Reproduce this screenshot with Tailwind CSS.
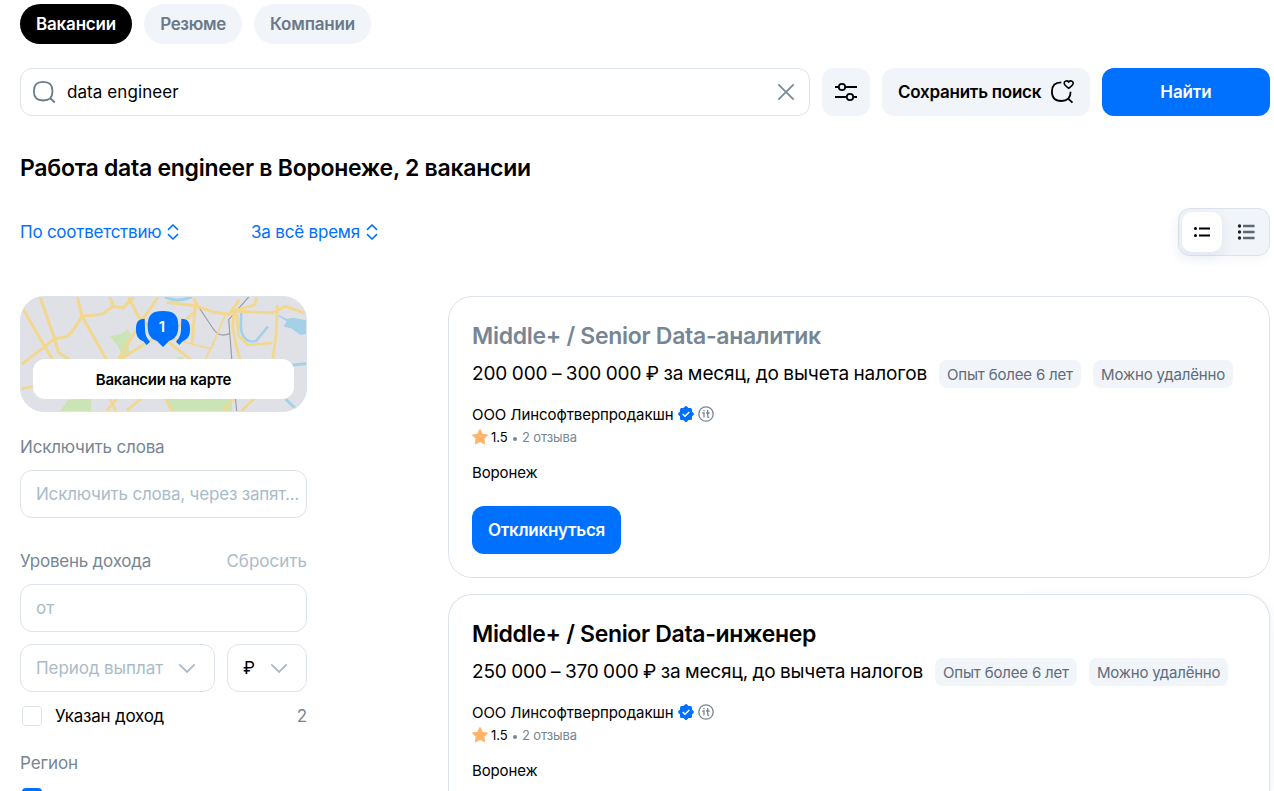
<!DOCTYPE html>
<html lang="ru">
<head>
    <meta charset="UTF-8">
    <meta name="viewport" content="width=device-width, initial-scale=1.0">
    <title>Работа data engineer в Воронеже</title>
    <script src="https://cdn.jsdelivr.net/npm/@tailwindcss/browser@4"></script>
</head>
<body class="bg-white text-black font-['Inter','Liberation_Sans',sans-serif] text-[17px] leading-6 whitespace-nowrap h-[791px] overflow-hidden">
    <div class="w-[1250px] h-[791px] ml-5 pt-1">
        <!-- Tabs -->
        <nav class="flex gap-3 h-10">
            <a class="flex items-center justify-center w-28 rounded-full bg-black text-white font-semibold tracking-[-0.19px]">Вакансии</a>
            <a class="flex items-center justify-center w-[98px] rounded-full bg-[#f1f4f9] text-[#6a7a89] font-semibold tracking-[-0.35px]">Резюме</a>
            <a class="flex items-center justify-center w-[117px] rounded-full bg-[#f1f4f9] text-[#6a7a89] font-semibold tracking-[-0.18px]">Компании</a>
        </nav>

        <!-- Search -->
        <div class="flex gap-3 h-12 mt-6">
            <div class="flex items-center flex-1 border border-[#dce3eb] rounded-xl px-[11px]">
                <svg class="w-6 h-6 mr-[11px]" viewBox="0 0 24 24" fill="none" stroke="#6a7a89" stroke-width="1.8">
                    <path d="M11.2 1.9c6.3 0 9.3 3 9.3 9.3s-3 9.3-9.3 9.3-9.3-3-9.3-9.3 3-9.3 9.3-9.3ZM18 18l4.800 4.500"/>
                </svg>
                <span class="flex-1 tracking-[0.08px]">data engineer</span>
                <svg class="w-6 h-6" viewBox="0 0 24 24" fill="none" stroke="#7b8b9a" stroke-width="1.8">
                    <path d="M4.300 4.300l15.400 15.400M19.700 4.300L4.300 19.700"/>
                </svg>
            </div>
            <button class="flex items-center justify-center w-12 rounded-xl bg-[#f1f4f9]">
                <svg class="w-6 h-6" viewBox="0 0 24 24" fill="none" stroke="#000" stroke-width="1.8">
                    <path d="M1 7h3.800M11.200 7H23M1 17h11.800M19.200 17H23"/>
                    <circle cx="8" cy="7" r="3.200"/>
                    <circle cx="16" cy="17" r="3.200"/>
                </svg>
            </button>
            <button class="flex items-center w-52 pl-4 gap-2 rounded-xl bg-[#f1f4f9] font-semibold tracking-[-0.25px]">
                <span class="w-[144px] text-left">Сохранить поиск</span>
                <svg class="w-6 h-6" viewBox="0 0 24 24" fill="none" stroke="#000" stroke-width="1.8">
                    <path d="M11.300 2.300C4.800 2.300 1.900 5.300 1.900 11.600s3 9.400 9.400 9.400 9.300-3 9.300-9.300M17.800 18.400l4.700 4.300"/>
                    <path d="M18.700 8.200c-2.300-1.400-4.500-3.100-4.500-5.100 0-2.500 3.200-2.900 4.500-1.100 1.300-1.800 4.500-1.400 4.500 1.100 0 2-2.200 3.700-4.500 5.100Z" stroke-width="1.600"/>
                </svg>
            </button>
            <button class="w-42 rounded-xl bg-[#0070ff] text-white font-semibold tracking-[-0.1px]">Найти</button>
        </div>

        <h1 class="mt-9 h-8 text-[23px] leading-8 font-semibold tracking-[-0.27px]">Работа data engineer в Воронеже, 2 вакансии</h1>

        <!-- Sorting -->
        <div class="flex items-center h-12 mt-6 text-[#0070ff]">
            <div class="flex items-center w-[231px]">
                <span class="tracking-[-0.24px]">По соответствию</span>
                <svg class="w-4 h-4 ml-1" viewBox="0 0 16 16" fill="none" stroke="currentColor" stroke-width="1.500">
                    <path d="M3 5.900L8 1l5 4.900M3 10.100L8 15l5-4.900"/>
                </svg>
            </div>
            <div class="flex items-center flex-1">
                <span class="tracking-[-0.19px]">За всё время</span>
                <svg class="w-4 h-4 ml-1" viewBox="0 0 16 16" fill="none" stroke="currentColor" stroke-width="1.500">
                    <path d="M3 5.900L8 1l5 4.900M3 10.100L8 15l5-4.900"/>
                </svg>
            </div>
            <div class="flex w-[92px] h-12 p-[3px] gap-1 rounded-xl border border-[#dce3eb] bg-[#f1f4f9] shadow-[-3px_5px_8px_rgba(112,144,176,0.06)]">
                <div class="flex items-center justify-center w-10 h-10 rounded-[10px] bg-white shadow-[0_4px_12px_rgba(112,144,176,0.14)]">
                    <svg class="w-6 h-6" viewBox="0 0 24 24" stroke="#000" stroke-width="1.900">
                        <path d="M9 8.500h11M9 15.500h11"/>
                        <circle cx="5.500" cy="8.500" r="1.500" stroke="none"/>
                        <circle cx="5.500" cy="15.500" r="1.500" stroke="none"/>
                    </svg>
                </div>
                <div class="flex items-center justify-center w-10 h-10">
                    <svg class="w-6 h-6" viewBox="0 0 24 24" stroke="#5b6875" stroke-width="2.600">
                        <path d="M9 6h11.500M9 12h11.500M9 18h11.500"/>
                        <g fill="#1c2127" stroke="none">
                            <circle cx="5.500" cy="6" r="1.700"/>
                            <circle cx="5.500" cy="12" r="1.700"/>
                            <circle cx="5.500" cy="18" r="1.700"/>
                        </g>
                    </svg>
                </div>
            </div>
        </div>

        <div class="flex h-[495px] mt-10">
            <!-- Filters -->
            <aside class="w-[287px] mr-[141px] shrink-0">
                <div class="relative h-[116px] rounded-3xl overflow-hidden bg-[#e0e1e7] border border-[#dce3eb]">
                    <svg class="absolute -left-px -top-px w-[287px] h-[116px]" viewBox="30 33 861 348" fill="none">
                        <!-- parks and water -->
                        <g fill="#cae4b6">
                            <path d="M300 154l34-8 18-14 12 18-12 18 8 38-20 10-16-32Z"/>
                            <path d="M150 378l25-34 68-4v38ZM470 340h196v40H484ZM500 215h20v10h-20Z"/>
                        </g>
                        <g stroke="#a5d1e8" stroke-width="9">
                            <path d="M465 36c24 12 50 12 80 0M846 240l44-4M826 342l30 28"/>
                            <path d="M694 82c-2 34-4 58 8 74 10 14 26 16 42 10M738 168l36-44" stroke-width="8"/>
                            <path d="M806 92l24 12 20-4 40 8v36l-18 4-28-20-20-4 8-16Z" fill="#a5d1e8" stroke-width="4"/>
                        </g>
                        <g stroke="#9b9ca1" stroke-width="3.500">
                            <path d="M558 54l48 72c14 22 24 30 54 20M716 36l-60 68 10 126 14 148"/>
                        </g>
                        <!-- roads -->
                        <g stroke="#f2d78e" stroke-width="9" stroke-linejoin="round">
                            <path d="M36 66l40 70 52 88M34 238l64-48 36-30c30 0 46-8 56-26l26-40 60-6 34-24 30 4 32-32"/>
                            <path d="M90 36l42 120 14 48 34 20M202 36l14 58 60 106 14 24M444 36l-54 80-66 110M300 36l10 30"/>
                            <path d="M356 36l30 60 80 68 76 60M550 84l-40 36-60 28-124 78M556 64l-10 110"/>
                            <path d="M470 52l84 10 60 20 44 6 30-44M550 40l14 24M666 78l120 6 40-20 64 22M672 78l-4 50 12 60 10 36"/>
                        </g>
                        <g stroke="#f2d78e" stroke-width="8" stroke-linejoin="round">
                            <path d="M680 86l6 66 28 28 74-6M802 60l-4 90-10 74M740 36l-6 24-66 18"/>
                            <path d="M34 312l54-12M290 378l50-60M300 342l18 36M420 320l-70 56M466 340l20 38M640 378l34-40M734 340l-40 38"/>
                            <path d="M646 90l-30 70-30 64M486 160l70 20 44 10 14-14" stroke-width="5"/>
                        </g>
                        <!-- pins -->
                        <g fill="#0070ff">
                            <path d="M404 101c-20 1-26 10-26 32 0 22 8 30 22 36l10 11 10-10c-12-12-15-24-15-40Z"/>
                            <path d="M514 101c20 1 26 10 26 32 0 22-8 30-22 36l-10 11-10-10c12-12 15-24 15-40Z"/>
                            <path d="M459 78c34 0 46 12 46 45 0 25-8 39-28 45l-18 18-18-18c-20-6-28-20-28-45 0-33 12-45 46-45Z"/>
                        </g>
                    </svg>
                    <div class="absolute left-[125px] top-5 w-8 h-5 text-center text-[15px] leading-5 font-semibold text-white">1</div>
                    <button class="absolute left-3 top-[62px] w-[261px] h-10 pt-0.5 rounded-xl bg-white text-[15px] font-semibold tracking-[-0.26px]">Вакансии на карте</button>
                </div>

                <p class="mt-[23px] text-[#768694] tracking-[-0.18px]">Исключить слова</p>
                <div class="flex items-center h-12 mt-[11px] pl-[15px] border border-[#dce3eb] rounded-xl text-[#aabbca] tracking-[-0.19px]">Исключить слова, через запят...</div>

                <div class="flex justify-between mt-[31px]">
                    <span class="text-[#768694] tracking-[-0.23px]">Уровень дохода</span>
                    <span class="text-[#aabbca]">Сбросить</span>
                </div>
                <div class="flex items-center h-12 mt-[11px] pl-[15px] border border-[#dce3eb] rounded-xl text-[#aabbca]">от</div>
                <div class="flex gap-3 h-12 mt-3">
                    <div class="flex items-center justify-between w-[195px] px-[15px] border border-[#dce3eb] rounded-xl text-[#aabbca]">
                        <span class="tracking-[-0.08px]">Период выплат</span>
                        <svg class="w-6 h-6" viewBox="0 0 24 24" fill="none" stroke="#aabbca" stroke-width="1.900">
                            <path d="M4.300 8.300l7.700 7.700 7.700-7.700"/>
                        </svg>
                    </div>
                    <div class="flex items-center justify-between w-20 px-[15px] border border-[#dce3eb] rounded-xl">
                        <span>₽</span>
                        <svg class="w-6 h-6" viewBox="0 0 24 24" fill="none" stroke="#aabbca" stroke-width="1.900">
                            <path d="M4.300 8.300l7.700 7.700 7.700-7.700"/>
                        </svg>
                    </div>
                </div>
                <div class="flex items-center h-6 mt-3 pl-0.5">
                    <span class="w-5 h-5 mr-[13px] border border-[#dce3eb] rounded"></span>
                    <span class="flex-1 tracking-[-0.23px]">Указан доход</span>
                    <span class="text-[#768694]">2</span>
                </div>
                <p class="mt-[23px] text-[#768694] tracking-[-0.11px]">Регион</p>
                <div class="w-5 h-5 mt-[13px] ml-0.5 rounded bg-[#0070ff]"></div>
            </aside>

            <!-- Vacancies -->
            <main class="w-[822px] shrink-0">
                <article class="h-[282px] px-[23px] pt-[23px] bg-white border border-[#dce3eb] rounded-3xl">
                    <h2 class="h-8 text-[23px] leading-8 font-semibold tracking-[-0.3px] text-[#768694]">Middle+ / Senior Data-аналитик</h2>
                    <div class="flex items-center gap-3 h-7 mt-2">
                        <span class="w-[455px] text-[19px] tracking-[-0.1px] [word-spacing:-0.76px]">200 000 – 300 000 ₽ за месяц, до вычета налогов</span>
                        <span class="w-[142px] h-7 px-2 pt-px leading-7 rounded-lg bg-[#f1f4f9] text-[15px] text-[#5d6c7b] tracking-[-0.17px]">Опыт более 6 лет</span>
                        <span class="w-[140px] h-7 px-2 pt-px leading-7 rounded-lg bg-[#f1f4f9] text-[15px] text-[#5d6c7b] tracking-[-0.15px]">Можно удалённо</span>
                    </div>
                    <div class="flex items-center h-6 mt-3.5 gap-1 text-[15px]">
                        <span class="w-[202px] pt-0.5 tracking-[-0.08px]">ООО Линсофтверпродакшн</span>
                        <svg class="w-4 h-4" viewBox="0 0 16 16">
                            <g fill="#0070ff">
                                <rect x="2" y="2" width="12" height="12" rx="1.500"/>
                                <rect x="2" y="2" width="12" height="12" rx="1.500" transform="rotate(45 8 8)"/>
                            </g>
                            <path d="M4.700 8l2.300 2.200 4.300-4.200" fill="none" stroke="#fff" stroke-width="1.500"/>
                        </svg>
                        <svg class="w-4 h-4" viewBox="0 0 16 16" fill="none" stroke="#768694" stroke-width="1.300">
                            <circle cx="8" cy="8" r="7.200"/>
                            <path d="M4.300 7h1.700v4.500M9.700 4v6.200c0 1 .5 1.300 1.500 1.200M8.200 7h3.400M6 4v1.300"/>
                        </svg>
                    </div>
                    <div class="flex items-center h-5 mt-px text-[13px]">
                        <svg class="w-4 h-4 mr-[3px]" viewBox="0 0 16 16" fill="#ffb56b" stroke="#ffb56b" stroke-width="1.400" stroke-linejoin="round">
                            <path d="M8 .8l2.200 4.600 5 .7-3.600 3.500.9 5L8 12.200l-4.500 2.400.9-5L.8 6.100l5-.7Z"/>
                        </svg>
                        <span class="w-4">1.5</span>
                        <span class="w-1 h-1 mx-[5.5px] mt-[3px] rounded-full bg-[#768694]"></span>
                        <span class="text-[#768694] tracking-[-0.11px]">2 отзыва</span>
                    </div>
                    <p class="mt-3.5 text-[15px] tracking-[-0.13px]">Воронеж</p>
                    <button class="block w-[149px] h-12 mt-[21px] rounded-xl bg-[#0070ff] text-white font-semibold tracking-[-0.27px]">Откликнуться</button>
                </article>

                <div class="relative mt-4">
                    <div class="absolute top-0 right-0 w-[247px] h-[197px] rounded-tr-3xl shadow-[0_4px_12px_rgba(112,144,176,0.14)] [clip-path:inset(-12px_-12px_0_0)]"></div>
                    <article class="relative h-[197px] px-[23px] pt-[23px] bg-white border border-b-0 border-[#dce3eb] rounded-t-3xl">
                        <h2 class="h-8 text-[23px] leading-8 font-semibold tracking-[-0.33px]">Middle+ / Senior Data-инженер</h2>
                        <div class="flex items-center gap-3 h-7 mt-2">
                            <span class="w-[451px] text-[19px] tracking-[-0.14px] [word-spacing:-0.77px]">250 000 – 370 000 ₽ за месяц, до вычета налогов</span>
                            <span class="w-[142px] h-7 px-2 pt-px leading-7 rounded-lg bg-[#f1f4f9] text-[15px] text-[#5d6c7b] tracking-[-0.17px]">Опыт более 6 лет</span>
                            <span class="w-[139px] h-7 px-2 pt-px leading-7 rounded-lg bg-[#f1f4f9] text-[15px] text-[#5d6c7b] tracking-[-0.2px]">Можно удалённо</span>
                        </div>
                        <div class="flex items-center h-6 mt-3.5 gap-1 text-[15px]">
                            <span class="w-[202px] pt-0.5 tracking-[-0.08px]">ООО Линсофтверпродакшн</span>
                            <svg class="w-4 h-4" viewBox="0 0 16 16">
                                <g fill="#0070ff">
                                    <rect x="2" y="2" width="12" height="12" rx="1.500"/>
                                    <rect x="2" y="2" width="12" height="12" rx="1.500" transform="rotate(45 8 8)"/>
                                </g>
                                <path d="M4.700 8l2.300 2.200 4.300-4.200" fill="none" stroke="#fff" stroke-width="1.500"/>
                            </svg>
                            <svg class="w-4 h-4" viewBox="0 0 16 16" fill="none" stroke="#768694" stroke-width="1.300">
                                <circle cx="8" cy="8" r="7.200"/>
                                <path d="M4.300 7h1.700v4.500M9.700 4v6.200c0 1 .5 1.300 1.500 1.200M8.200 7h3.400M6 4v1.300"/>
                            </svg>
                        </div>
                        <div class="flex items-center h-5 mt-px text-[13px]">
                            <svg class="w-4 h-4 mr-[3px]" viewBox="0 0 16 16" fill="#ffb56b" stroke="#ffb56b" stroke-width="1.400" stroke-linejoin="round">
                                <path d="M8 .8l2.200 4.600 5 .7-3.600 3.500.9 5L8 12.200l-4.500 2.400.9-5L.8 6.100l5-.7Z"/>
                            </svg>
                            <span class="w-4">1.5</span>
                            <span class="w-1 h-1 mx-[5.5px] mt-[3px] rounded-full bg-[#768694]"></span>
                            <span class="text-[#768694] tracking-[-0.11px]">2 отзыва</span>
                        </div>
                        <p class="mt-3.5 text-[15px] tracking-[-0.13px]">Воронеж</p>
                    </article>
                </div>
            </main>
        </div>
    </div>
</body>
</html>
